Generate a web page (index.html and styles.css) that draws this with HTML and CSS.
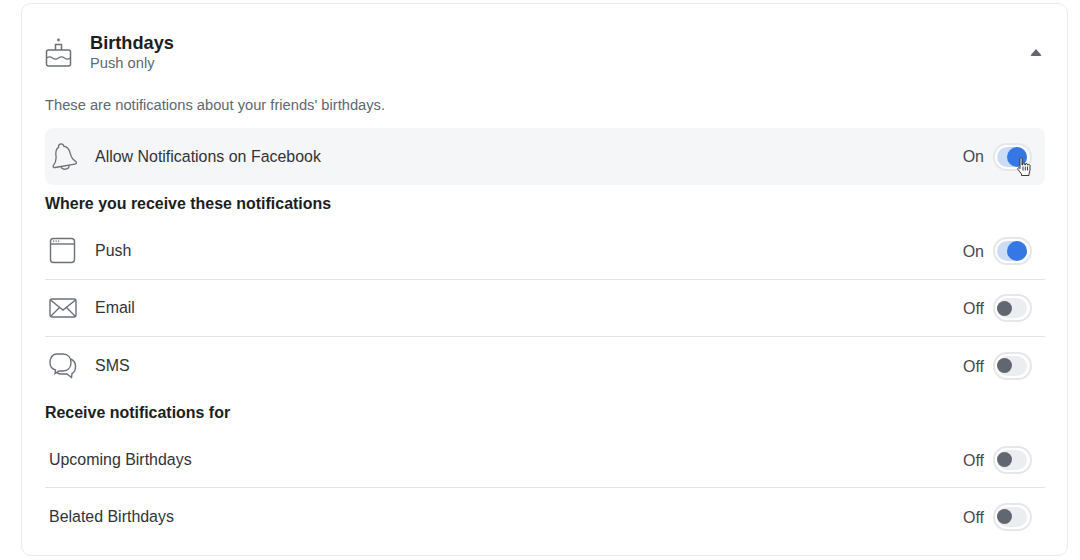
FILE: index.html
```html
<!DOCTYPE html>
<html lang="en">
<head>
<meta charset="utf-8">
<title>Birthdays notifications</title>
<link rel="stylesheet" href="styles.css">
</head>
<body>
<section class="card">
  <header class="head">
    <svg class="cake" width="28" height="32" viewBox="0 0 28 32" fill="none" stroke="#6b707a" stroke-width="1.5">
      <circle cx="13.500" cy="4" r="1.400" fill="#6b707a" stroke="none"/>
      <path d="M10.500 14V8.500h6V14"/>
      <rect x="1.500" y="14" width="24" height="16" rx="2"/>
      <path d="M1.500 22c2.500-1.600 4-1.600 6 0s4 1.600 6 0 4-1.600 6 0 4 1.600 6 0" stroke-width="1.200"/>
    </svg>
    <div class="head-text">
      <div class="title">Birthdays</div>
      <div class="sub">Push only</div>
    </div>
    <span class="caret"></span>
  </header>
  <p class="desc">These are notifications about your friends' birthdays.</p>

  <div class="row master">
    <svg class="ico" width="28" height="32" viewBox="0 0 28 32" fill="none" stroke="#6b707a" stroke-width="1.300">
      <g transform="rotate(-10 14 16)">
        <path d="M11.500 5.500c-.6-3.600 5.600-3.600 5 0 3.600 1.300 5 4.200 5.200 8 .2 4 1.300 6.800 4.300 9.300.8 1.300 0 2.200-1.500 2.200H4.500c-1.500 0-2.300-.9-1.500-2.200 3-2.500 4.100-5.300 4.300-9.300.2-3.800 1-6.700 4.200-8z"/>
        <path d="M10.500 25c0 4.500 8 4.500 8 0"/>
      </g>
    </svg>
    <span class="label">Allow Notifications on Facebook</span>
    <span class="state">On</span>
    <span class="toggle on"><span class="knob"></span></span>
    <svg class="cursor" width="14" height="20" viewBox="0 0 14 20">
      <path d="M3 1.500c0-1 2-1 2 0V8h.8V6.500c.4-.8 1.700-.8 2 0V8h.6V7c.4-.8 1.700-.8 2 0v1h.6c.4-.6 1.600-.6 2 .2V13c0 1.500-1 2.500-1 4v1.500H4.500V17L1 12.500c-.8-1.300.5-2.400 1.500-1.500l.5.500z" fill="#fff" stroke="#222" stroke-width=".9"/>
      <path d="M6 9.500v4M8.300 9.500v4M10.500 9.500v4" stroke="#222" stroke-width=".9"/>
    </svg>
  </div>

  <h3 class="section first">Where you receive these notifications</h3>
  <div class="row line">
    <svg class="ico" width="28" height="28" viewBox="0 0 28 28" fill="none" stroke="#6b707a" stroke-width="1.400">
      <rect x="1.500" y="1.500" width="24" height="24" rx="3"/>
      <path d="M1.500 7h24"/>
      <path d="M4 4.200h1.300M6.500 4.200h1.300M9 4.200h1.300" stroke-width="1.200"/>
    </svg>
    <span class="label">Push</span>
    <span class="state">On</span>
    <span class="toggle on"><span class="knob"></span></span>
  </div>
  <div class="row line">
    <svg class="ico" width="28" height="28" viewBox="0 0 28 28" fill="none" stroke="#6b707a" stroke-width="1.400">
      <rect x="1" y="5" width="26" height="18" rx="2"/>
      <path d="M1.500 6 14 16 26.500 6M1.500 22.500l9-9M26.500 22.500l-9-9"/>
    </svg>
    <span class="label">Email</span>
    <span class="state">Off</span>
    <span class="toggle"><span class="knob"></span></span>
  </div>
  <div class="row">
    <svg class="ico" width="28" height="28" viewBox="0 0 28 28" fill="none" stroke="#6b707a" stroke-width="1.400">
      <path d="M8 2h6c5 0 8 3.500 8 8.500S19 19 14 19h-4l-4 2.500.5-3.500C3 17 1 14.500 1 10.500S3 2 8 2z"/>
      <path d="M21.500 7c3 1 5 3.500 5 7.500 0 3-1 6-3.500 7l-.5 4-4.500-3.500H12c-2 0-3.500-.5-4.500-2"/>
    </svg>
    <span class="label">SMS</span>
    <span class="state">Off</span>
    <span class="toggle"><span class="knob"></span></span>
  </div>

  <h3 class="section second">Receive notifications for</h3>
  <div class="row line plain">
    <span class="label">Upcoming Birthdays</span>
    <span class="state">Off</span>
    <span class="toggle"><span class="knob"></span></span>
  </div>
  <div class="row plain">
    <span class="label">Belated Birthdays</span>
    <span class="state">Off</span>
    <span class="toggle"><span class="knob"></span></span>
  </div>
</section>
</body>
</html>
```
FILE: styles.css
```css
* { box-sizing: border-box; }
html, body { margin: 0; padding: 0; }
body {
  background: #fff;
  font-family: "Liberation Sans", Arial, sans-serif;
  color: #1c1e21;
  padding: 3px 12px 0 21px;
  height: 560px;
  overflow: hidden;
}
.card {
  width: 1047px;
  height: 553px;
  border: 1px solid #ebebeb;
  border-radius: 10px;
  padding: 0 22px 0 23px;
}
.head {
  display: flex;
  align-items: center;
  height: 72px;
  padding-top: 24px;
}
.cake { flex: none; margin-right: 17px; }
.head-text { flex: 1; }
.title { font-size: 18.200px; font-weight: 700; line-height: 22px; color: #1c1e21; }
.sub { font-size: 14.700px; line-height: 18px; color: #606770; }
.caret {
  flex: none;
  width: 0;
  height: 0;
  margin-right: 3px;
  border-left: 6px solid transparent;
  border-right: 6px solid transparent;
  border-bottom: 7px solid #606770;
  border-radius: 2px;
}
.desc {
  margin: 0;
  height: 52px;
  padding-top: 20px;
  font-size: 14.700px;
  line-height: 18px;
  color: #606770;
}
.row {
  position: relative;
  display: flex;
  align-items: center;
  height: 57px;
  padding: 0 13px 0 4px;
}
.line { border-bottom: 1px solid #e2e3e6; }
.master { background: #f5f6f7; border-radius: 8px; }
.plain.line { height: 56px; }
.ico { flex: none; margin-right: 18px; }
.label { flex: 1; font-size: 15.950px; line-height: 20px; color: #303338; }
.state { font-size: 16px; line-height: 20px; color: #444950; margin: 2px 9px 0 0; }
.master .state { margin-top: 0; }
.toggle {
  flex: none;
  display: flex;
  align-items: center;
  width: 39px;
  height: 28px;
  padding: 0 3px 0 2px;
  border: 2px solid #e6e7ea;
  border-radius: 14px;
  background: #fff;
  position: relative;
}
.toggle::before {
  content: "";
  position: absolute;
  inset: 2px 3px 2px 2px;
  border-radius: 10px;
  background: #ebedf0;
}
.toggle.on { justify-content: flex-end; }
.toggle.on::before { background: #cddcf6; }
.knob {
  position: relative;
  width: 15px;
  height: 15px;
  border-radius: 50%;
  background: #606770;
}
.on .knob { width: 20px; height: 20px; background: #3578e5; }
.cursor { position: absolute; right: 14px; top: 29px; }
.section { margin: 0; font-size: 15.950px; font-weight: 700; line-height: 20px; color: #1c1e21; }
.first { height: 38px; padding-top: 9px; }
.second { height: 38px; padding-top: 9px; }
```
